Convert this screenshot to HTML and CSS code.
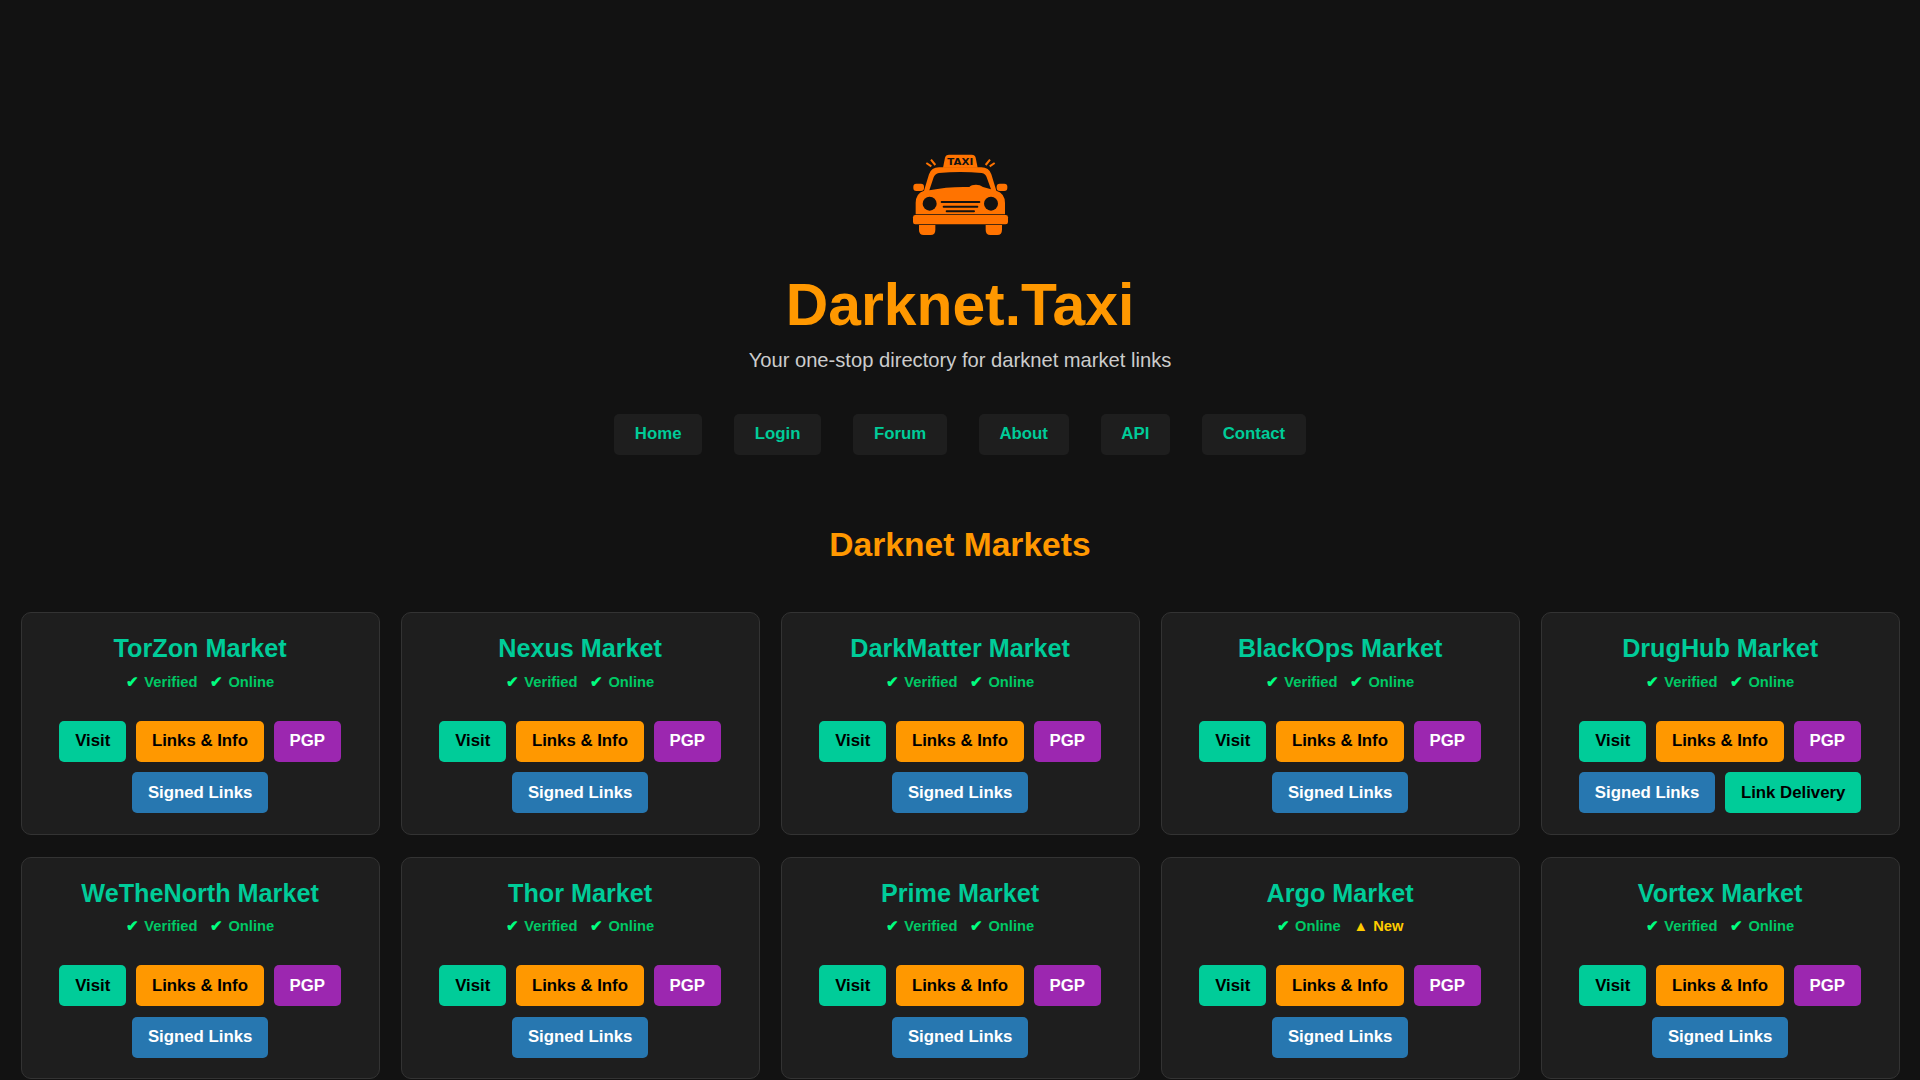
FILE: index.html
```html
<!DOCTYPE html>
<html lang="en">
<head>
  <meta charset="UTF-8" />
  <meta name="viewport" content="width=device-width, initial-scale=1.0" />
  <title>Darknet.Taxi</title>
  <link rel="stylesheet" href="styles.css">
</head>
<body>

  <header>
    <svg class="logo" viewBox="0 0 360 300" aria-label="Taxi">
      <!-- Roof sign -->
      <path class="fill" d="M129 68 L135 38 Q137 29 147 29 H215 Q225 29 227 38 L233 68 Z" />
      <text x="181" y="59" text-anchor="middle" textLength="78" lengthAdjust="spacingAndGlyphs">TAXI</text>
      <path class="rays" d="M79 54 L94 64 M93 44 L106 60 M284 54 L269 64 M270 44 L257 60" />
      <!-- Body -->
      <path class="fill" d="M72 137 L87 88 Q94 67 117 67 H244 Q267 67 274 88 L289 137 Q315 145 315 174 V208 H47 V174 Q47 145 72 137 Z" />
      <path class="cut" d="M88 136 L101 97 Q105 86 117 84 Q181 78 245 84 Q257 86 260 97 L273 133 L249 126 Q240 119 228 119 Q214 119 208 126 Q145 124 88 136 Z" />
      <rect class="fill" x="40" y="116" width="32" height="22" rx="9" />
      <rect class="fill" x="290" y="116" width="32" height="22" rx="9" />
      <circle class="cut" cx="89" cy="176" r="21" />
      <circle class="cut" cx="273" cy="176" r="21" />
      <path class="grille" d="M125 171 H238 M131 185 H232 M140 199 H222" />
      <!-- Bumper and wheels -->
      <rect class="fill" x="39" y="210" width="285" height="28" rx="7" />
      <path class="fill" d="M57 240 H106 V254 Q106 270 92 270 H71 Q57 270 57 254 Z" />
      <path class="fill" d="M257 240 H306 V254 Q306 270 292 270 H271 Q257 270 257 254 Z" />
    </svg>
    <h1>Darknet.Taxi</h1>
    <p class="subtext">Your one-stop directory for darknet market links</p>
    <nav>
      <a href="#">Home</a>
      <a href="#">Login</a>
      <a href="#">Forum</a>
      <a href="#">About</a>
      <a href="#">API</a>
      <a href="#">Contact</a>
    </nav>
  </header>

  <main>
    <h2>Darknet Markets</h2>
    <section class="markets">
      <div class="card">
        <h3>TorZon Market</h3>
        <div class="status"><span class="ok">Verified</span><span class="ok">Online</span></div>
        <div class="buttons">
          <a href="#" class="btn visit">Visit</a>
          <a href="#" class="btn info">Links &amp; Info</a>
          <a href="#" class="btn pgp">PGP</a>
          <a href="#" class="btn signed">Signed Links</a>
        </div>
      </div>
      <div class="card">
        <h3>Nexus Market</h3>
        <div class="status"><span class="ok">Verified</span><span class="ok">Online</span></div>
        <div class="buttons">
          <a href="#" class="btn visit">Visit</a>
          <a href="#" class="btn info">Links &amp; Info</a>
          <a href="#" class="btn pgp">PGP</a>
          <a href="#" class="btn signed">Signed Links</a>
        </div>
      </div>
      <div class="card">
        <h3>DarkMatter Market</h3>
        <div class="status"><span class="ok">Verified</span><span class="ok">Online</span></div>
        <div class="buttons">
          <a href="#" class="btn visit">Visit</a>
          <a href="#" class="btn info">Links &amp; Info</a>
          <a href="#" class="btn pgp">PGP</a>
          <a href="#" class="btn signed">Signed Links</a>
        </div>
      </div>
      <div class="card">
        <h3>BlackOps Market</h3>
        <div class="status"><span class="ok">Verified</span><span class="ok">Online</span></div>
        <div class="buttons">
          <a href="#" class="btn visit">Visit</a>
          <a href="#" class="btn info">Links &amp; Info</a>
          <a href="#" class="btn pgp">PGP</a>
          <a href="#" class="btn signed">Signed Links</a>
        </div>
      </div>
      <div class="card">
        <h3>DrugHub Market</h3>
        <div class="status"><span class="ok">Verified</span><span class="ok">Online</span></div>
        <div class="buttons">
          <a href="#" class="btn visit">Visit</a>
          <a href="#" class="btn info">Links &amp; Info</a>
          <a href="#" class="btn pgp">PGP</a>
          <a href="#" class="btn signed">Signed Links</a>
          <a href="#" class="btn visit">Link Delivery</a>
        </div>
      </div>
      <div class="card">
        <h3>WeTheNorth Market</h3>
        <div class="status"><span class="ok">Verified</span><span class="ok">Online</span></div>
        <div class="buttons">
          <a href="#" class="btn visit">Visit</a>
          <a href="#" class="btn info">Links &amp; Info</a>
          <a href="#" class="btn pgp">PGP</a>
          <a href="#" class="btn signed">Signed Links</a>
        </div>
      </div>
      <div class="card">
        <h3>Thor Market</h3>
        <div class="status"><span class="ok">Verified</span><span class="ok">Online</span></div>
        <div class="buttons">
          <a href="#" class="btn visit">Visit</a>
          <a href="#" class="btn info">Links &amp; Info</a>
          <a href="#" class="btn pgp">PGP</a>
          <a href="#" class="btn signed">Signed Links</a>
        </div>
      </div>
      <div class="card">
        <h3>Prime Market</h3>
        <div class="status"><span class="ok">Verified</span><span class="ok">Online</span></div>
        <div class="buttons">
          <a href="#" class="btn visit">Visit</a>
          <a href="#" class="btn info">Links &amp; Info</a>
          <a href="#" class="btn pgp">PGP</a>
          <a href="#" class="btn signed">Signed Links</a>
        </div>
      </div>
      <div class="card">
        <h3>Argo Market</h3>
        <div class="status"><span class="ok">Online</span><span class="new">New</span></div>
        <div class="buttons">
          <a href="#" class="btn visit">Visit</a>
          <a href="#" class="btn info">Links &amp; Info</a>
          <a href="#" class="btn pgp">PGP</a>
          <a href="#" class="btn signed">Signed Links</a>
        </div>
      </div>
      <div class="card">
        <h3>Vortex Market</h3>
        <div class="status"><span class="ok">Verified</span><span class="ok">Online</span></div>
        <div class="buttons">
          <a href="#" class="btn visit">Visit</a>
          <a href="#" class="btn info">Links &amp; Info</a>
          <a href="#" class="btn pgp">PGP</a>
          <a href="#" class="btn signed">Signed Links</a>
        </div>
      </div>
    </section>
  </main>

</body>
</html>
```
FILE: styles.css
```css
:root {
  --bg-color: #121212;
  --card-bg: #1e1e1e;
  --border-color: #333;
  --orange: #ff9800;
  --green: #00cc99;
  --logo-color: #ff7300;
  font-size: 105%;
}
* {
  box-sizing: border-box;
}
body {
  margin: 0;
  font-family: Arial, "Liberation Sans", sans-serif;
  line-height: 1.5;
  background-color: var(--bg-color);
  color: #ccc;
  text-align: center;
  overflow: hidden;
}
h1, h2, h3, p {
  margin: 0;
}
h1, h2, h3 {
  line-height: 1.2;
}
a {
  text-decoration: none;
  font-weight: bold;
}
header {
  padding-top: 145px;
}
.logo {
  display: block;
  width: 120px;
  height: 100px;
  margin: 0 auto 24.6px;
}
.logo .fill {
  fill: var(--logo-color);
}
.logo .cut {
  fill: var(--bg-color);
}
.logo .rays {
  stroke: var(--logo-color);
  stroke-width: 6;
}
.logo .grille {
  stroke: var(--bg-color);
  stroke-width: 6;
  stroke-linecap: round;
}
.logo text {
  font: bold 28px "DejaVu Sans", sans-serif;
  fill: var(--bg-color);
}
h1 {
  font-size: 3.5rem;
  color: var(--orange);
}
.subtext {
  font-size: 1.2rem;
  margin-top: 5px;
}
nav {
  display: flex;
  justify-content: center;
  gap: 32.2px;
  margin-top: 38.6px;
}
nav a {
  padding: 7.5px 20.6px 8.3px;
  border-radius: 5px;
  background-color: var(--card-bg);
  color: var(--green);
}
h2 {
  margin-top: 69.8px;
  font-size: 2rem;
  color: var(--orange);
}
.markets {
  display: grid;
  grid-template-columns: repeat(5, 1fr);
  gap: 21.5px 21px;
  padding: 47px 20.4px 21px 20.6px;
}
.card {
  padding: 20.3px 21px 20.8px;
  background-color: var(--card-bg);
  border: 1px solid var(--border-color);
  border-radius: 10px;
}
.card h3 {
  font-size: 1.5rem;
  color: var(--green);
}
.status {
  display: flex;
  justify-content: center;
  gap: 12.7px;
  height: 22px;
  margin: 7.3px 0 28.1px;
  font-size: 0.875rem;
  font-weight: bold;
}
.status span::before {
  margin-right: 5.3px;
}
.ok {
  color: #00c965;
}
.ok::before {
  content: "✔";
  color: #00ff80;
}
.new {
  color: #ffcc00;
}
.new::before {
  content: "▲";
}
.buttons {
  display: flex;
  flex-wrap: wrap;
  justify-content: center;
  gap: 10.3px 10px;
}
.btn {
  padding: 7.4px 15.8px 8.4px;
  border-radius: 5px;
  color: #fff;
}
.visit {
  background-color: var(--green);
  color: #000;
}
.info {
  background-color: var(--orange);
  color: #000;
}
.pgp {
  background-color: #9c27b0;
}
.signed {
  background-color: #2777b0;
}
```
